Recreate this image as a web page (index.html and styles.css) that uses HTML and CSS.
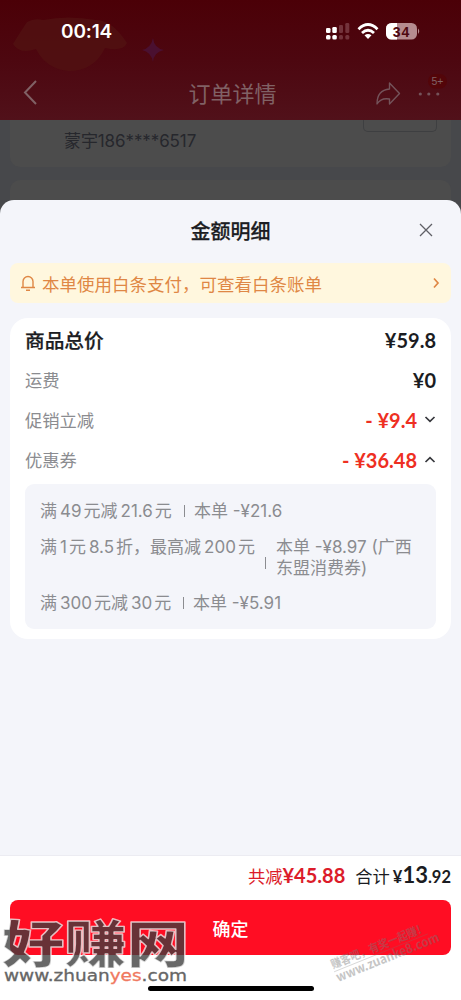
FILE: index.html
```
<!DOCTYPE html>
<html lang="zh-CN">
<head>
<meta charset="utf-8">
<title>金额明细</title>
<link rel="stylesheet" href="styles.css">
</head>
<body>
<div class="phone">
  <header class="top">
    <svg class="decor" width="461" height="120" viewBox="0 0 461 120">
      <path d="M13 44 Q21 31 27 22 Q34 18 43 20 Q68 15 96 20 Q112 20 127 43 Q123 52 105 48 Q94 71 69 71 Q46 69 36 49 Q20 55 13 44Z" fill="#511111" opacity=".8"/>
      <path d="M153 38 Q154 48 164 50 Q154 52 153 62 Q151 52 142 50 Q151 48 153 38Z" fill="#4a1030"/>
    </svg>
    <div class="status">
      <span class="time">00:14</span>
      <svg class="signals" width="96" height="20" viewBox="0 0 96 20">
        <g fill="#fff">
          <rect x="1" y="7" width="4.5" height="5" rx="1.3"/><rect x="7.3" y="6" width="4.5" height="6" rx="1.3"/>
          <rect x="1" y="14" width="4.5" height="4.5" rx="1.5"/><rect x="7.3" y="14" width="4.5" height="4.5" rx="1.5"/>
        </g>
        <g fill="#73333b">
          <rect x="14" y="4" width="4" height="8" rx="1.3"/><rect x="20.3" y="2" width="4" height="10" rx="1.3"/>
          <rect x="14" y="14" width="4" height="4.5" rx="1.5"/><rect x="20.3" y="14" width="4" height="4.5" rx="1.5"/>
        </g>
        <g fill="none" stroke="#fff" stroke-width="2.8">
          <path d="M33.5 8.2 Q43 -1 52.5 8.2"/><path d="M37 12 Q43 6.5 49 12"/>
        </g>
        <path d="M39.5 14.3 Q43 11.5 46.5 14.3 L43 18Z" fill="#fff"/>
        <rect x="61" y="2" width="31" height="16.5" rx="5.5" fill="#b58b8f"/>
        <path d="M72 2 H66.5 A5.5 5.5 0 0 0 61 7.5 V13 A5.5 5.5 0 0 0 66.5 18.5 H72Z" fill="#fff"/>
        <path d="M93 7.5 Q95.5 10 93 13Z" fill="#b58b8f"/>
        <text x="76.4" y="15.5" class="battery">34</text>
      </svg>
    </div>
    <nav class="nav">
      <svg width="60" height="40" viewBox="0 0 60 40"><path d="M36 8 L25 19.5 L36 31" fill="none" stroke="#806165" stroke-width="2"/></svg>
      <h1 class="nav-title">订单详情</h1>
      <svg width="90" height="40" viewBox="0 0 90 40">
        <path d="M18.5 10 L28.5 20.5 L18.5 31 V26 Q10 24.5 6 31 Q6 17 18.5 16Z" fill="none" stroke="#74535a" stroke-width="1.4" stroke-linejoin="round"/>
        <g fill="#74535a"><circle cx="49.3" cy="21" r="1.6"/><circle cx="57.8" cy="21" r="1.6"/><circle cx="66.8" cy="21" r="1.6"/></g>
        <rect x="57" y="1" width="19" height="14.5" rx="7.2" fill="#530509"/>
        <text x="66.5" y="12.3" class="count">5+</text>
      </svg>
    </nav>
  </header>

  <section class="behind">
    <div class="address"><span>蒙宇186****6517</span><i class="edit"></i></div>
    <div class="next-card"></div>
  </section>

  <main class="sheet">
    <div class="sheet-head">
      <h2>金额明细</h2>
      <svg class="close" width="16" height="16" viewBox="0 0 16 16"><path d="M2 2 L14 14 M14 2 L2 14" stroke="#5f6066" stroke-width="1.3"/></svg>
    </div>
    <div class="notice">
      <svg width="16" height="18" viewBox="0 0 16 18" fill="none" stroke="#df8745" stroke-width="1.4"><path d="M1 13.5 H15 M3 13 V7.5 A5 5 0 0 1 13 7.5 V13 M6 16.3 H10"/></svg>
      <span>本单使用白条支付，可查看白条账单</span>
      <svg class="go" width="8" height="12" viewBox="0 0 8 12"><path d="M2 1.5 L6 6 L2 10.5" fill="none" stroke="#df8745" stroke-width="1.7"/></svg>
    </div>
    <div class="card">
      <div class="row strong"><span class="label">商品总价</span><b>¥59.8</b></div>
      <div class="row"><span class="label">运费</span><b>¥0</b></div>
      <div class="row"><span class="label">促销立减</span><b class="off">- ¥9.4</b><svg width="12" height="8" viewBox="0 0 12 8"><path d="M1.5 1 L6 5.3 L10.5 1" fill="none" stroke="#36373c" stroke-width="1.7"/></svg></div>
      <div class="row"><span class="label">优惠券</span><b class="off">- ¥36.48</b><svg width="12" height="8" viewBox="0 0 12 8"><path d="M1.5 6 L6 1.7 L10.5 6" fill="none" stroke="#36373c" stroke-width="1.7"/></svg></div>
      <div class="coupons">
        <div class="coupon"><span class="rule rule-a">满<em>49</em>元减<em>21.6</em>元</span><i class="bar"></i><span class="gain gain-a">本单 -¥21.6</span></div>
        <div class="coupon tall"><span class="rule rule-b">满<em>1</em>元<em>8.5</em>折，最高减<em>200</em>元</span><i class="bar"></i><span class="gain gain-b">本单 -¥8.97 (广西<br>东盟消费券)</span></div>
        <div class="coupon"><span class="rule rule-c">满<em>300</em>元减<em>30</em>元</span><i class="bar"></i><span class="gain gain-c">本单 -¥5.91</span></div>
      </div>
    </div>
  </main>

  <footer class="footer">
    <div class="totals">
      <span class="saved">共减<b>¥45.88</b></span>
      <span class="pay">合计<b><small>¥</small>13<small>.92</small></b></span>
    </div>
    <button class="confirm">确定</button>
    <div class="home"></div>
  </footer>

  <svg class="marks" width="461" height="100" viewBox="0 900 461 100">
    <text class="brand" transform="translate(2 963) scale(1.2 1)" textLength="156" lengthAdjust="spacingAndGlyphs">好赚网</text>
    <text class="site" x="4" y="981" textLength="183" lengthAdjust="spacingAndGlyphs">www.zhuan<tspan fill="#f0795f">yes</tspan>.com</text>
    <g class="faint" transform="translate(333 969) rotate(-22)">
      <text x="0" y="0" font-size="12" textLength="102" lengthAdjust="spacingAndGlyphs">赚客吧，有奖一起赚！</text>
      <path d="M0 3 H101" stroke="#777" stroke-width=".6"/>
      <text x="0" y="14" font-size="13" textLength="110" lengthAdjust="spacingAndGlyphs">www.zuanke8.com</text>
    </g>
  </svg>
</div>
</body>
</html>
```
FILE: styles.css
```
* { box-sizing: border-box; }
body {
  margin: 0;
  font-family: "Liberation Sans", "Noto Sans CJK SC", sans-serif;
  color: #1b1c22;
}
svg { display: block; flex: none; }
h1, h2 { margin: 0; }
i, em { font-style: normal; }

.phone {
  position: relative;
  width: 461px;
  height: 1000px;
  overflow: hidden;
  display: flex;
  flex-direction: column;
  background: #47484b;
}

.top {
  position: relative;
  height: 120px;
  flex: none;
  background: linear-gradient(#4b0007 0%, #4d0710 50%, #51111a 100%);
}
.decor { position: absolute; left: 0; top: 0; }
.status {
  position: relative;
  height: 62px;
  display: flex;
  justify-content: space-between;
  padding: 21px 40px 0 61px;
}
.time {
  font: 600 19px/22px Inter, sans-serif;
  color: #fff;
  letter-spacing: -.15px;
}
.battery { font: 700 14px "Liberation Sans", sans-serif; fill: #4d0710; text-anchor: middle; letter-spacing: .8px; }
.nav {
  position: relative;
  height: 58px;
  display: flex;
  align-items: center;
  padding-top: 6px;
}
.nav svg { margin-bottom: 8px; margin-top: 6px; }
.nav-title {
  flex: 1;
  font-size: 22px;
  line-height: 30px;
  font-weight: 400;
  color: #806165;
  text-align: center;
  padding: 2px 0 0 34px;
}
.count { font: 500 10.5px "Liberation Sans", sans-serif; fill: #806165; text-anchor: middle; }

.behind {
  height: 80px;
  flex: none;
  padding: 0 10px;
  display: flex;
  flex-direction: column;
  gap: 13px;
}
.address {
  height: 47px;
  display: flex;
  justify-content: space-between;
  padding: 10px 14px 0 54px;
  border-radius: 0 0 10px 10px;
  background: #4c4c4c;
  font: 17px/22px Inter, "Noto Sans CJK SC", sans-serif;
  letter-spacing: -.1px;
  color: #26272c;
}
.edit {
  width: 74px;
  height: 12px;
  margin-top: -10px;
  border: 1px solid #3e3f41;
  border-top: 0;
  border-radius: 0 0 5px 5px;
}
.next-card { flex: 1; border-radius: 10px 10px 0 0; background: #4c4c4c; }

.sheet {
  height: 655px;
  flex: none;
  padding: 0 10px;
  background: #f4f5fa;
  border-radius: 14px 14px 0 0;
}
.sheet-head {
  height: 63px;
  display: flex;
  align-items: center;
  justify-content: center;
  position: relative;
}
.sheet-head h2 { font-size: 20px; line-height: 28px; font-weight: 500; padding-top: 1px; -webkit-text-stroke: .25px; }
.close { position: absolute; right: 17px; top: 22px; }
.notice {
  height: 40px;
  display: flex;
  align-items: center;
  gap: 6px;
  padding: 0 11px 0 10px;
  border-radius: 8px;
  background: #fff7de;
  color: #df8745;
  font-size: 17.5px;
  white-space: nowrap;
}
.go { margin-left: auto; }

.card {
  height: 321px;
  margin-top: 15px;
  padding: 2px 15px 0;
  border-radius: 18px;
  background: #fff;
}
.row {
  height: 40px;
  display: flex;
  align-items: center;
  font-size: 17.3px;
  line-height: 24px;
}
.row .label { flex: 1; padding-top: 2px; color: #8b8c90; }
.row.strong .label { color: #1b1c22; font-size: 19.7px; font-weight: 500; -webkit-text-stroke: .25px; }
.row b { font: 700 20px/24px Lato, sans-serif; }
.row .off { color: #ee2f22; }
.row svg { margin-left: 7px; }

.coupons {
  height: 145px;
  margin-top: 4px;
  padding: 17px 15px 0;
  border-radius: 9px;
  background: #f4f5fa;
  color: #8b8c90;
  font: 17px/21px Inter, "Noto Sans CJK SC", sans-serif;
  white-space: nowrap;
}
.coupon { display: flex; height: 21px; align-items: center; }
.coupon.tall { height: 42px; margin: 15px 0 14px; align-items: flex-start; }
.coupon em { margin: 0 2px 0 3px; }
.rule { flex: none; }
.rule-a { width: 144px; }
.rule-b { width: 225px; }
.rule-c { width: 143px; }
.bar { width: 1px; height: 12px; flex: none; background: #8b8c90; }
.coupon:not(.tall) .bar { margin-bottom: 2px; }
.tall .bar { margin-top: 20px; }
.gain { margin-left: 9px; }
.gain-b { margin-left: 10px; }

.footer {
  flex: 1;
  background: #fff;
  border-top: 1px solid #ececf2;
  display: flex;
  flex-direction: column;
  align-items: center;
}
.totals {
  width: 100%;
  height: 44px;
  display: flex;
  justify-content: flex-end;
  align-items: center;
  gap: 10px;
  padding: 0 10px 5px;
  font-size: 17.3px;
}
.totals span { display: flex; align-items: baseline; }
.totals b { font: 700 20px/24px Lato, sans-serif; }
.totals .saved { color: #dc1c2a; }
.totals .pay b { margin-left: 3px; font-size: 22px; }
.pay small { font-size: 16.5px; }
.confirm {
  width: 441px;
  height: 55px;
  border: 0;
  border-radius: 8px;
  background: #ff0d23;
  color: #fff;
  font: 500 18px "Liberation Sans", "Noto Sans CJK SC", sans-serif;
}
.home { width: 166px; height: 5px; margin-top: 31px; border-radius: 3px; background: #000; }

.marks { position: absolute; left: 0; bottom: 0; }
.brand {
  font: 900 51px "Noto Sans CJK SC", sans-serif;
  fill: #3d3d3d;
  fill-opacity: .78;
  stroke: #fff;
  stroke-opacity: .7;
  stroke-width: 1.3;
  stroke-linejoin: round;
}
.site { font: 400 15px "DejaVu Sans", sans-serif; fill: #666; stroke: #666; stroke-width: .3; }
.site tspan { stroke: #f0795f; }
.faint {
  font-family: "Noto Sans CJK SC", sans-serif;
  font-weight: 700;
  fill: #777;
  opacity: .42;
}
```
